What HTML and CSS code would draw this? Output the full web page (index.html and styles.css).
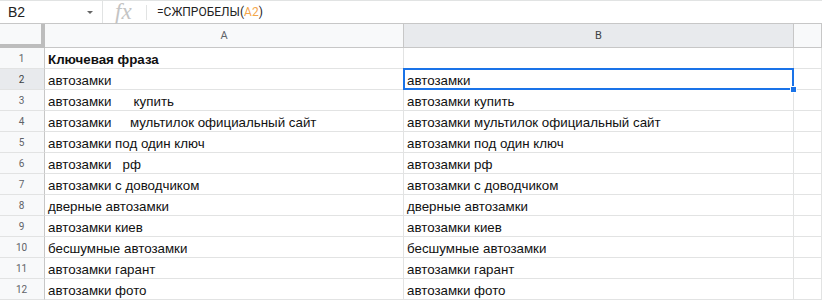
FILE: index.html
```html
<!DOCTYPE html>
<html lang="ru">
<head>
  <meta charset="UTF-8">
  <title>Таблица</title>
  <link rel="stylesheet" href="styles.css">
</head>
<body>
  <div class="formula-bar">
    <div class="name-box">
      <span class="cell-ref">B2</span>
      <span class="caret"></span>
    </div>
    <div class="fx">fx</div>
    <div class="formula">=СЖПРОБЕЛЫ(<span class="ref">A2</span>)</div>
  </div>

  <div class="sheet">
    <div class="row head-row">
      <div class="corner"></div>
      <div class="col-head col-a">A</div>
      <div class="col-head col-b selected">B</div>
      <div class="col-head col-c"></div>
    </div>

    <div class="row">
      <div class="row-head">1</div>
      <div class="cell col-a bold">Ключевая фраза</div>
      <div class="cell col-b"></div>
      <div class="cell col-c"></div>
    </div>
    <div class="row">
      <div class="row-head selected">2</div>
      <div class="cell col-a">автозамки</div>
      <div class="cell col-b active">автозамки<span class="handle"></span></div>
      <div class="cell col-c"></div>
    </div>
    <div class="row">
      <div class="row-head">3</div>
      <div class="cell col-a">автозамки      купить</div>
      <div class="cell col-b">автозамки купить</div>
      <div class="cell col-c"></div>
    </div>
    <div class="row">
      <div class="row-head">4</div>
      <div class="cell col-a">автозамки     мультилок официальный сайт</div>
      <div class="cell col-b">автозамки мультилок официальный сайт</div>
      <div class="cell col-c"></div>
    </div>
    <div class="row">
      <div class="row-head">5</div>
      <div class="cell col-a">автозамки под один ключ</div>
      <div class="cell col-b">автозамки под один ключ</div>
      <div class="cell col-c"></div>
    </div>
    <div class="row">
      <div class="row-head">6</div>
      <div class="cell col-a">автозамки   рф</div>
      <div class="cell col-b">автозамки рф</div>
      <div class="cell col-c"></div>
    </div>
    <div class="row">
      <div class="row-head">7</div>
      <div class="cell col-a">автозамки с доводчиком</div>
      <div class="cell col-b">автозамки с доводчиком</div>
      <div class="cell col-c"></div>
    </div>
    <div class="row">
      <div class="row-head">8</div>
      <div class="cell col-a">дверные автозамки</div>
      <div class="cell col-b">дверные автозамки</div>
      <div class="cell col-c"></div>
    </div>
    <div class="row">
      <div class="row-head">9</div>
      <div class="cell col-a">автозамки киев</div>
      <div class="cell col-b">автозамки киев</div>
      <div class="cell col-c"></div>
    </div>
    <div class="row">
      <div class="row-head">10</div>
      <div class="cell col-a">бесшумные автозамки</div>
      <div class="cell col-b">бесшумные автозамки</div>
      <div class="cell col-c"></div>
    </div>
    <div class="row">
      <div class="row-head">11</div>
      <div class="cell col-a">автозамки гарант</div>
      <div class="cell col-b">автозамки гарант</div>
      <div class="cell col-c"></div>
    </div>
    <div class="row">
      <div class="row-head">12</div>
      <div class="cell col-a">автозамки фото</div>
      <div class="cell col-b">автозамки фото</div>
      <div class="cell col-c"></div>
    </div>
  </div>
</body>
</html>
```

FILE: styles.css
```css
* {
  margin: 0;
  padding: 0;
  box-sizing: border-box;
}

body {
  width: 822px;
  height: 301px;
  overflow: hidden;
  background: #fff;
  font-family: Arial, "Liberation Sans", sans-serif;
  color: #111;
}

/* Formula bar */
.formula-bar {
  display: flex;
  align-items: center;
  height: 24px;
  border-top: 1px solid #e1e3e3;
  border-bottom: 1px solid #c7c7c7;
}

.name-box {
  display: flex;
  align-items: center;
  width: 103px;
  height: 100%;
  padding-left: 8px;
  border-right: 1px solid #e1e3e3;
  font-family: Arial, "Liberation Sans", sans-serif;
  font-size: 14px;
  color: #222;
}

.cell-ref {
  flex: 1;
}

.caret {
  width: 0;
  height: 0;
  margin-right: 9px;
  border-left: 3px solid transparent;
  border-right: 3px solid transparent;
  border-top: 3px solid #666;
}

.fx {
  width: 44px;
  height: 15px;
  padding-left: 12px;
  border-right: 1px solid #e1e3e3;
  font-family: "Liberation Serif", serif;
  font-style: italic;
  font-size: 23px;
  line-height: 13px;
  color: #c4c4c4;
}

.formula {
  padding-left: 10px;
  font-family: Roboto, Arial, sans-serif;
  font-size: 12px;
  color: #222;
}

.formula .ref {
  color: #f4a64a;
}

/* Grid */
.row {
  display: flex;
  height: 21px;
}

.head-row {
  height: 24px;
}

.corner {
  width: 45px;
  flex-shrink: 0;
  background: #f8f9fa;
  border-right: 4px solid #bdbdbd;
  border-bottom: 4px solid #bdbdbd;
}

.col-head {
  display: flex;
  align-items: center;
  justify-content: center;
  background: #f8f9fa;
  border-right: 1px solid #c7c7c7;
  border-bottom: 1px solid #c7c7c7;
  font-family: Roboto, Arial, sans-serif;
  font-size: 11px;
  color: #5f6368;
}

.col-head.selected {
  background: #e8eaed;
  color: #3c4043;
}

.col-a {
  width: 359px;
  flex-shrink: 0;
}

.col-b {
  width: 390px;
  flex-shrink: 0;
}

.col-c {
  flex: 1;
}

.row-head {
  display: flex;
  align-items: center;
  justify-content: center;
  width: 45px;
  flex-shrink: 0;
  padding-right: 1px;
  background: #f8f9fa;
  border-right: 1px solid #c7c7c7;
  border-bottom: 1px solid #e2e3e3;
  font-family: Roboto, Arial, sans-serif;
  font-size: 10px;
  color: #5f6368;
}

.row-head.selected {
  background: #e8eaed;
  color: #3c4043;
}

.cell {
  position: relative;
  display: flex;
  align-items: center;
  padding: 2px 3px 0 3px;
  border-right: 1px solid #e2e3e3;
  border-bottom: 1px solid #e2e3e3;
  font-size: 13.33px;
  white-space: pre;
  overflow: hidden;
}

.cell.bold {
  font-weight: bold;
}

.cell.active {
  overflow: visible;
}

/* selection outline */
.cell.active::before {
  content: "";
  position: absolute;
  left: -1px;
  top: -1px;
  right: -1px;
  bottom: -1px;
  border: 2px solid #1a73e8;
}

.handle {
  position: absolute;
  right: -4px;
  bottom: -4px;
  width: 7px;
  height: 7px;
  background: #1a73e8;
  border: 1px solid #fff;
  z-index: 2;
}
```
